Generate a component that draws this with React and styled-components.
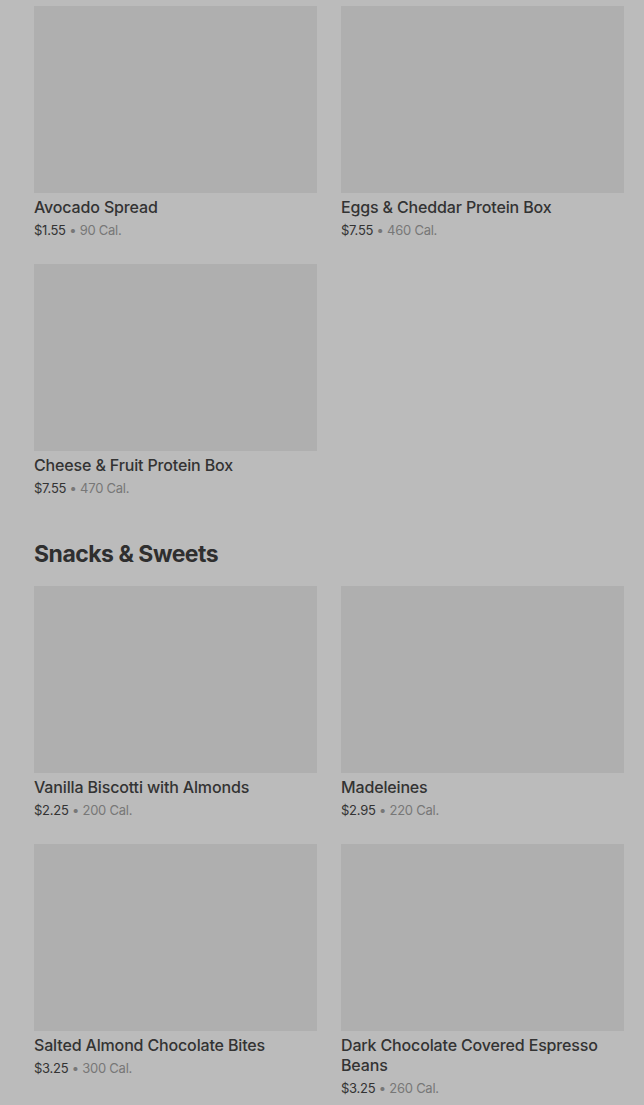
import React from 'react'
import styled, { createGlobalStyle } from 'styled-components'

const GlobalStyle = createGlobalStyle`
  html, body {
    margin: 0;
    padding: 0;
    background: #bbbbbb;
    font-family: Inter, 'Liberation Sans', Arial, sans-serif;
  }
`

const Page = styled.div`
  background: #bbbbbb;
  padding: 6px 20px 0 34px;
  min-height: 1105px;
  box-sizing: border-box;
`

const Section = styled.section`
  margin-bottom: 40px;
`

const Heading = styled.h2`
  margin: 0 0 18px;
  padding-top: 2px;
  font-size: 23px;
  font-weight: 700;
  letter-spacing: -0.5px;
  line-height: 28px;
  color: #2f2f2f;
`

const Grid = styled.div`
  display: grid;
  grid-template-columns: 283px 283px;
  column-gap: 24px;
  row-gap: 24px;
`

const Card = styled.div`
  display: flex;
  flex-direction: column;
`

const Thumb = styled.div`
  height: 187px;
  background: #afafaf;
`

const Name = styled.div`
  margin-top: 4px;
  font-size: 16px;
  font-weight: 500;
  line-height: 20px;
  letter-spacing: -0.15px;
  color: #333333;
`

const Meta = styled.div`
  margin-top: 3px;
  font-size: 13px;
  line-height: 20px;
  letter-spacing: -0.25px;
  color: #333333;
`

const Cal = styled.span`
  color: #777777;
`

const sections = [
  {
    items: [
      { name: 'Avocado Spread', price: '$1.55', cal: '90 Cal.' },
      { name: 'Eggs & Cheddar Protein Box', price: '$7.55', cal: '460 Cal.' },
      { name: 'Cheese & Fruit Protein Box', price: '$7.55', cal: '470 Cal.' },
    ],
  },
  {
    title: 'Snacks & Sweets',
    items: [
      { name: 'Vanilla Biscotti with Almonds', price: '$2.25', cal: '200 Cal.' },
      { name: 'Madeleines', price: '$2.95', cal: '220 Cal.' },
      { name: 'Salted Almond Chocolate Bites', price: '$3.25', cal: '300 Cal.' },
      { name: 'Dark Chocolate Covered Espresso Beans', price: '$3.25', cal: '260 Cal.' },
    ],
  },
]

const App = () => {
  return (
    <>
      <GlobalStyle />
      <Page>
        {sections.map((s, i) => (
          <Section key={i}>
            {s.title && <Heading>{s.title}</Heading>}
            <Grid>
              {s.items.map((item) => (
                <Card key={item.name}>
                  <Thumb />
                  <Name>{item.name}</Name>
                  <Meta>
                    {item.price} <Cal>• {item.cal}</Cal>
                  </Meta>
                </Card>
              ))}
            </Grid>
          </Section>
        ))}
      </Page>
    </>
  )
}

export default App
